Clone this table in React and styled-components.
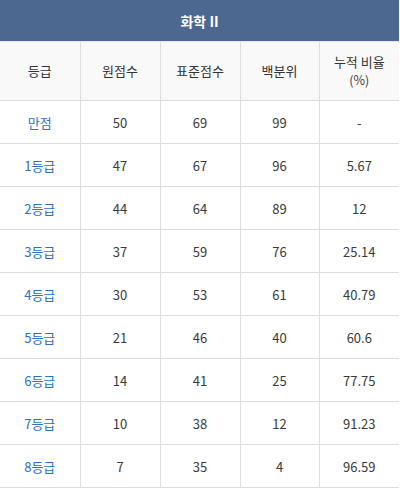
import React from "react";
import styled, { createGlobalStyle } from "styled-components";

const GlobalStyle = createGlobalStyle`
  body {
    margin: 0;
    background: #ffffff;
    font-family: "Noto Sans CJK KR", "Noto Sans", sans-serif;
  }
`;

const rows = [
  ["만점", "50", "69", "99", "-"],
  ["1등급", "47", "67", "96", "5.67"],
  ["2등급", "44", "64", "89", "12"],
  ["3등급", "37", "59", "76", "25.14"],
  ["4등급", "30", "53", "61", "40.79"],
  ["5등급", "21", "46", "40", "60.6"],
  ["6등급", "14", "41", "25", "77.75"],
  ["7등급", "10", "38", "12", "91.23"],
  ["8등급", "7", "35", "4", "96.59"],
];

const App = () => {
  return (
    <>
      <GlobalStyle />
      <Table>
        <colgroup>
          <col style={{ width: 80 }} />
          <col style={{ width: 80 }} />
          <col style={{ width: 80 }} />
          <col style={{ width: 79 }} />
          <col style={{ width: 80 }} />
        </colgroup>
        <thead>
          <tr>
            <Title colSpan={5}>화학 II</Title>
          </tr>
          <tr>
            <HeadCell>등급</HeadCell>
            <HeadCell>원점수</HeadCell>
            <HeadCell>표준점수</HeadCell>
            <HeadCell>백분위</HeadCell>
            <HeadCell>
              누적 비율
              <Small>(%)</Small>
            </HeadCell>
          </tr>
        </thead>
        <tbody>
          {rows.map((r) => (
            <tr key={r[0]}>
              <Cell $link>{r[0]}</Cell>
              <Cell>{r[1]}</Cell>
              <Cell>{r[2]}</Cell>
              <Cell>{r[3]}</Cell>
              <Cell>{r[4]}</Cell>
            </tr>
          ))}
        </tbody>
      </Table>
    </>
  );
};

export default App;

const Table = styled.table`
  width: 399px;
  border-collapse: collapse;
  table-layout: fixed;
  font-size: 13px;
  color: #333333;
`;

const Title = styled.th`
  height: 41px;
  padding: 0;
  background-color: #4d6890;
  color: #ffffff;
  font-size: 14px;
  font-weight: bold;
  text-align: center;
  border-bottom: 1px solid #e6e6e6;
`;

const HeadCell = styled.th`
  height: 58px;
  padding: 0;
  background-color: #f9f9f9;
  font-weight: normal;
  color: #333333;
  line-height: 18px;
  text-align: center;
  border-left: 1px solid #dddddd;
  border-bottom: 1px solid #dddddd;

  &:first-child {
    border-left: none;
  }
`;

const Small = styled.div`
  font-size: 12.5px;
  color: #444444;
`;

const Cell = styled.td`
  height: 42px;
  padding: 0;
  text-align: center;
  color: ${(p) => (p.$link ? "#2a6fc9" : "#3a3a3a")};
  border-left: 1px solid #dddddd;
  border-bottom: 1px solid #dddddd;

  &:first-child {
    border-left: none;
  }
`;
